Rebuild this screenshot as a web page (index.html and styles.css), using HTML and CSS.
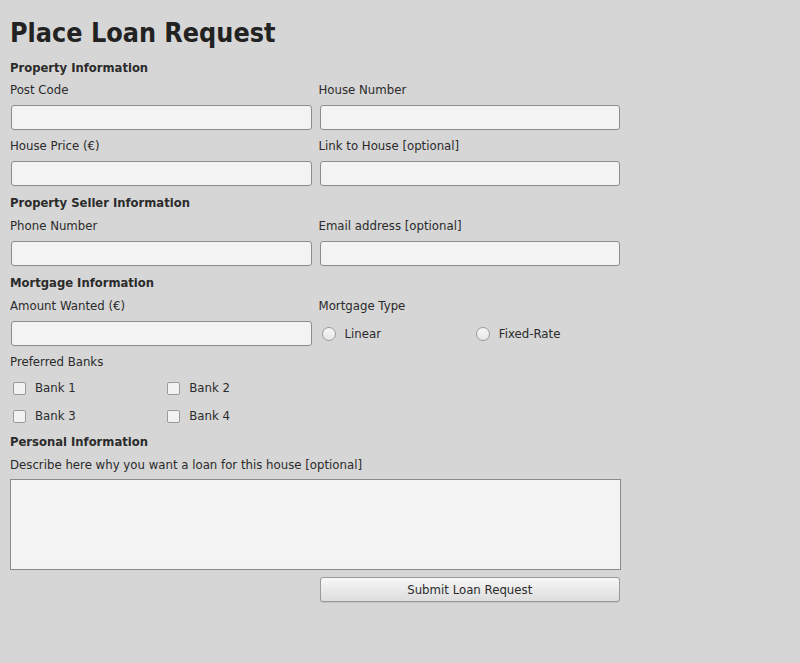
FILE: index.html
```html
<!DOCTYPE html>
<html>
<head>
<meta charset="utf-8">
<link rel="stylesheet" href="styles.css">
</head>
<body>
<div class="page">
  <h1 class="title">Place Loan Request</h1>
  <div class="form">
    <div class="section first">Property Information</div>
    <div class="grid">
      <div class="field">
        <label class="label">Post Code</label>
        <input class="input" type="text">
      </div>
      <div class="field">
        <label class="label">House Number</label>
        <input class="input" type="text">
      </div>
      <div class="field">
        <label class="label">House Price (€)</label>
        <input class="input" type="text">
      </div>
      <div class="field">
        <label class="label">Link to House [optional]</label>
        <input class="input" type="text">
      </div>
    </div>
    <div class="section">Property Seller Information</div>
    <div class="grid">
      <div class="field">
        <label class="label">Phone Number</label>
        <input class="input" type="text">
      </div>
      <div class="field">
        <label class="label">Email address [optional]</label>
        <input class="input" type="text">
      </div>
    </div>
    <div class="section">Mortgage Information</div>
    <div class="grid tight">
      <div class="field">
        <label class="label">Amount Wanted (€)</label>
        <input class="input" type="text">
      </div>
      <div class="field">
        <label class="label">Mortgage Type</label>
        <div class="options">
          <label class="option"><span class="radio"></span>Linear</label>
          <label class="option"><span class="radio"></span>Fixed-Rate</label>
        </div>
      </div>
    </div>
    <div class="banks">
      <div class="label">Preferred Banks</div>
      <div class="grid">
        <div class="options checks">
          <label class="option"><span class="check"></span>Bank 1</label>
          <label class="option"><span class="check"></span>Bank 2</label>
          <label class="option"><span class="check"></span>Bank 3</label>
          <label class="option"><span class="check"></span>Bank 4</label>
        </div>
      </div>
    </div>
    <div class="section">Personal Information</div>
    <div class="field">
      <label class="label">Describe here why you want a loan for this house [optional]</label>
      <textarea class="textarea"></textarea>
    </div>
    <div class="grid actions">
      <div></div>
      <button class="button" type="button">Submit Loan Request</button>
    </div>
  </div>
</div>
</body>
</html>
```

FILE: styles.css
```css
html, body {
  margin: 0;
  padding: 0;
  background: #d6d6d6;
}

body {
  font-family: "DejaVu Sans", sans-serif;
  font-size: 11.75px;
  color: #2b2b2b;
}

.page {
  padding: 15px 0 0 10px;
  width: 611px;
}

.title {
  margin: 0;
  font-family: "DejaVu Sans Condensed", "DejaVu Sans", sans-serif;
  font-size: 26.7px;
  line-height: 36px;
  font-weight: bold;
  color: #222;
}

.form {
  display: flex;
  flex-direction: column;
  margin-top: 8px;
}

.section {
  font-weight: bold;
  font-size: 11.6px;
  line-height: 18px;
  height: 18px;
  margin-bottom: 5px;
}

.section.first {
  margin-bottom: 4px;
}

.grid {
  display: grid;
  grid-template-columns: 1fr 1fr;
  column-gap: 6px;
  row-gap: 7px;
  margin-bottom: 8px;
}

.grid.tight {
  margin-bottom: 7px;
}

.field {
  display: flex;
  flex-direction: column;
}

.label {
  line-height: 18px;
  height: 18px;
  margin-bottom: 6px;
}

.input {
  box-sizing: border-box;
  height: 25px;
  margin: 0 1px;
  border: 1px solid #8c8c8c;
  border-radius: 3px;
  background: #f3f3f3;
  font: inherit;
  padding: 0 4px;
}

.options {
  display: grid;
  grid-template-columns: 1fr 1fr;
  column-gap: 6px;
  row-gap: 10px;
}

.option {
  display: flex;
  align-items: center;
  height: 18px;
  padding-left: 3px;
  gap: 9px;
}

.field .options {
  height: 25px;
  align-items: center;
}

.radio {
  box-sizing: border-box;
  width: 14px;
  height: 14px;
  border-radius: 50%;
  border: 1px solid #9a9a9a;
  background: linear-gradient(#f6f6f6, #e6e6e6);
}

.check {
  box-sizing: border-box;
  width: 13px;
  height: 13px;
  border-radius: 2px;
  border: 1px solid #9a9a9a;
  background: #f2f2f2;
}

.banks .label {
  margin-bottom: 8px;
}

.banks .grid {
  row-gap: 0;
  margin-bottom: 8px;
}

.textarea {
  box-sizing: border-box;
  height: 91px;
  width: 611px;
  margin: -1px 0 0 0;
  border: 1px solid #8a8a8a;
  border-radius: 0;
  background: #f3f3f3;
  resize: none;
  font: inherit;
}

.actions {
  margin-top: 7px;
}

.button {
  box-sizing: border-box;
  height: 25px;
  margin: 0 1px;
  border: 1px solid #999;
  border-radius: 3px;
  background: linear-gradient(#f7f7f7, #dddddd);
  font: inherit;
  color: #2b2b2b;
  box-shadow: 0 1px 0 #c4c4c4;
}
```
